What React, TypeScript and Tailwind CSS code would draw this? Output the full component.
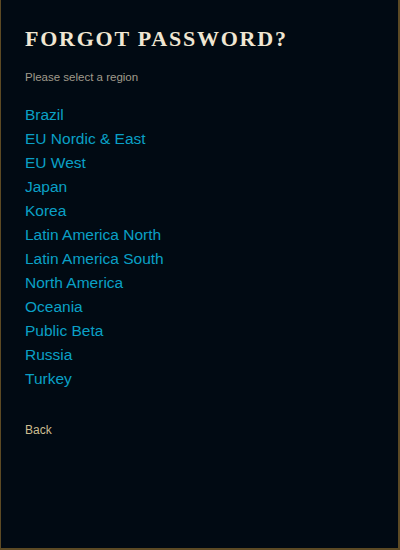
const regions = [
  'Brazil',
  'EU Nordic & East',
  'EU West',
  'Japan',
  'Korea',
  'Latin America North',
  'Latin America South',
  'North America',
  'Oceania',
  'Public Beta',
  'Russia',
  'Turkey',
]

export default function App() {
  return (
    <div className="w-[400px] h-[550px] bg-[#010a13] border-l border-r-2 border-b-2 border-[#5c4a24] pl-[24px] pt-[26px] font-['Liberation_Sans',sans-serif]">
      <h1 className="font-['Liberation_Serif',serif] text-[22px] leading-[26px] font-bold tracking-[0.08em] text-[#f0e6d2] uppercase">
        Forgot Password?
      </h1>
      <p className="mt-[18px] text-[11.5px] leading-[14px] text-[#a09b8c]">
        Please select a region
      </p>
      <ul className="mt-[19px] flex flex-col">
        {regions.map((r) => (
          <li key={r}>
            <a href="#" className="block text-[15.5px] leading-[24px] text-[#0aa0c6]">
              {r}
            </a>
          </li>
        ))}
      </ul>
      <a href="#" className="mt-[31px] block text-[12px] leading-[16px] text-[#cdbe91]">
        Back
      </a>
    </div>
  )
}
